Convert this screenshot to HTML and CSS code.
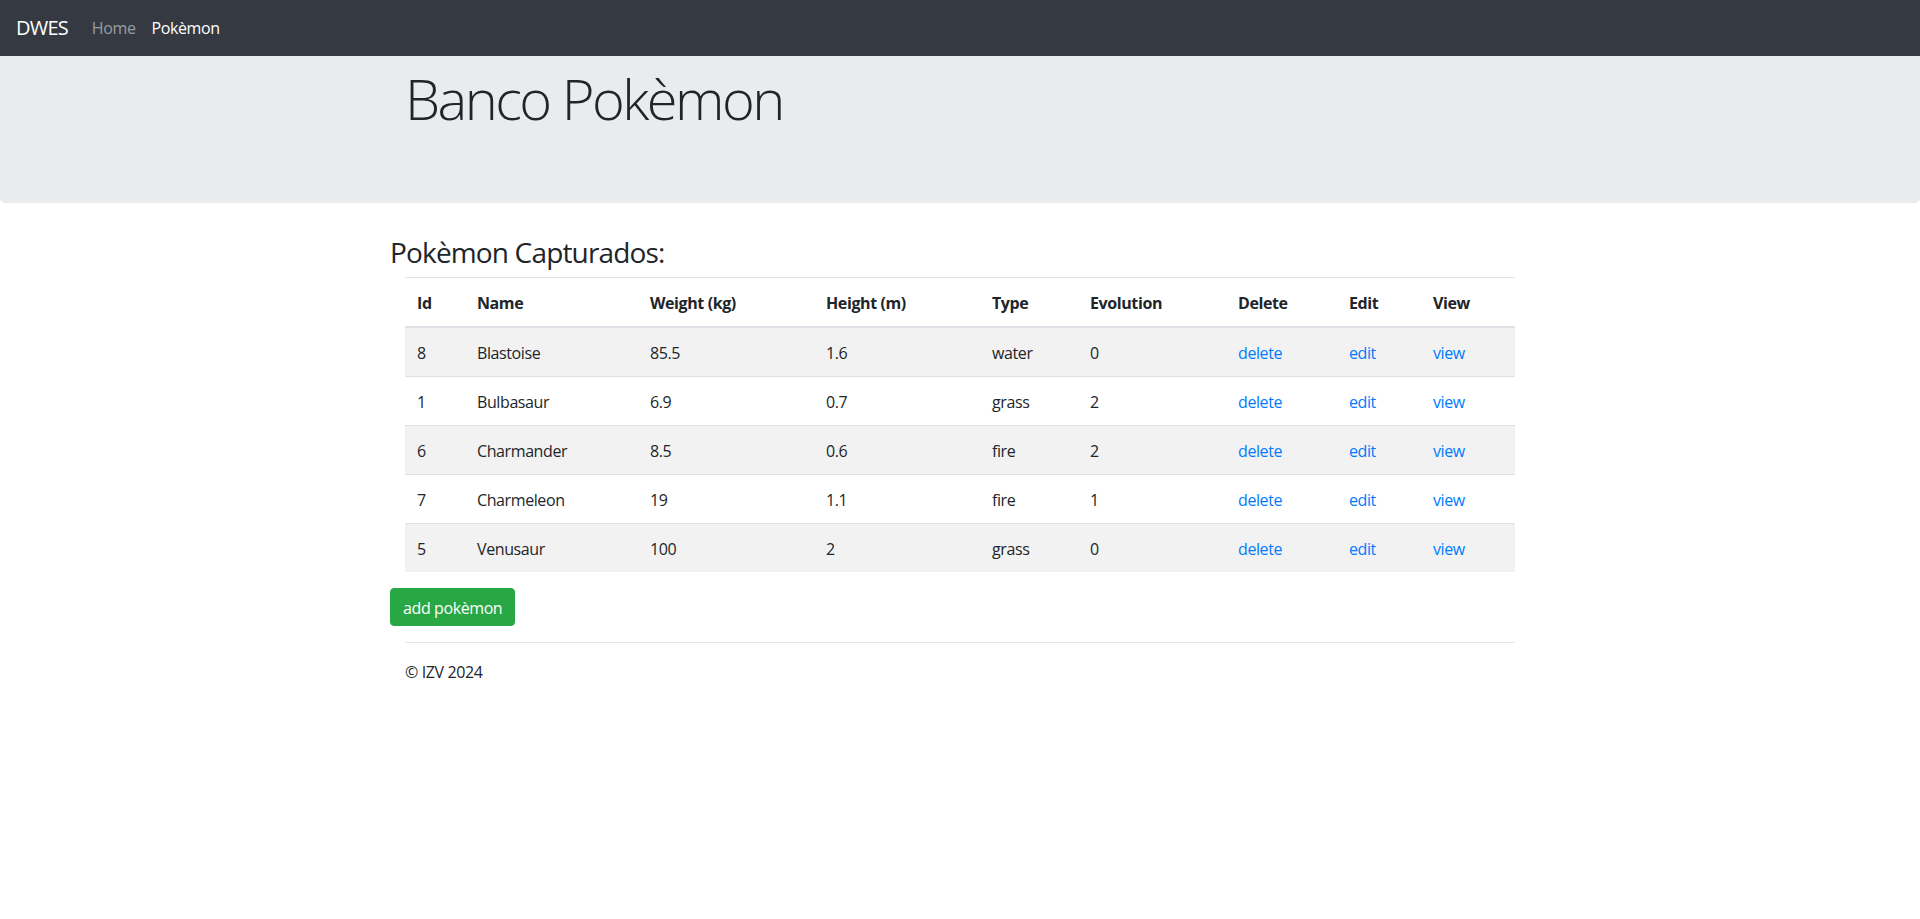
FILE: index.html
```html
<!DOCTYPE html>
<html lang="es">
<head>
<meta charset="utf-8">
<title>Banco Pokèmon</title>
<link rel="stylesheet" href="styles.css">
</head>
<body>
<nav class="navbar">
  <a class="brand" href="#">DWES</a>
  <ul class="nav">
    <li><a class="nav-link" href="#">Home</a></li>
    <li><a class="nav-link active" href="#">Pokèmon</a></li>
  </ul>
</nav>
<main>
  <div class="jumbotron">
    <div class="container">
      <h1 class="display">Banco Pokèmon</h1>
    </div>
  </div>
  <div class="container">
    <div class="row">
      <h3 class="section-title">Pokèmon Capturados:</h3>
    </div>
    <table class="table">
      <colgroup>
        <col class="c-id"><col class="c-name"><col class="c-weight"><col class="c-height"><col class="c-type"><col class="c-evo"><col class="c-del"><col class="c-edit"><col class="c-view">
      </colgroup>
      <thead>
        <tr><th>Id</th><th>Name</th><th>Weight (kg)</th><th>Height (m)</th><th>Type</th><th>Evolution</th><th>Delete</th><th>Edit</th><th>View</th></tr>
      </thead>
      <tbody>
        <tr><td>8</td><td>Blastoise</td><td>85.5</td><td>1.6</td><td>water</td><td>0</td><td><a href="#">delete</a></td><td><a href="#">edit</a></td><td><a href="#">view</a></td></tr>
        <tr><td>1</td><td>Bulbasaur</td><td>6.9</td><td>0.7</td><td>grass</td><td>2</td><td><a href="#">delete</a></td><td><a href="#">edit</a></td><td><a href="#">view</a></td></tr>
        <tr><td>6</td><td>Charmander</td><td>8.5</td><td>0.6</td><td>fire</td><td>2</td><td><a href="#">delete</a></td><td><a href="#">edit</a></td><td><a href="#">view</a></td></tr>
        <tr><td>7</td><td>Charmeleon</td><td>19</td><td>1.1</td><td>fire</td><td>1</td><td><a href="#">delete</a></td><td><a href="#">edit</a></td><td><a href="#">view</a></td></tr>
        <tr><td>5</td><td>Venusaur</td><td>100</td><td>2</td><td>grass</td><td>0</td><td><a href="#">delete</a></td><td><a href="#">edit</a></td><td><a href="#">view</a></td></tr>
      </tbody>
    </table>
    <div class="row">
      <a class="btn btn-success" href="#">add pokèmon</a>
    </div>
  </div>
  <footer class="container footer">
    <hr>
    <p>© IZV 2024</p>
  </footer>
</main>
</body>
</html>
```

FILE: styles.css
```css
* { box-sizing: border-box; }

html, body {
  margin: 0;
  padding: 0;
}

body {
  font-family: "Open Sans", "Noto Sans", "Liberation Sans", sans-serif;
  font-size: 16px;
  line-height: 1.5;
  letter-spacing: -0.025em;
  color: #212529;
  background: #fff;
}

a { text-decoration: none; color: #007bff; }

/* Navbar */
.navbar {
  display: flex;
  align-items: center;
  height: 56px;
  padding: 0 16px;
  background: #353a42;
}

.brand {
  font-size: 20px;
  line-height: 30px;
  color: #fff;
  margin-right: 16px;
  letter-spacing: -0.04em;
}

.nav {
  display: flex;
  list-style: none;
  margin: 0;
  padding: 0;
}

.nav-link {
  display: block;
  padding: 8px;
  color: rgba(255, 255, 255, 0.5);
}

.nav-link.active { color: #fff; }

/* Jumbotron */
.jumbotron {
  background: #e9ecef;
  padding: 9px 0 63px;
  margin-bottom: 32px;
  border-radius: 0 0 5px 5px;
}

.container {
  width: 1140px;
  margin: 0 auto;
  padding: 0 15px;
}

.display {
  margin: 0 0 8px;
  font-size: 56px;
  font-weight: 300;
  line-height: 1.2;
  letter-spacing: -0.045em;
}

.row {
  display: flex;
  margin: 0 -15px;
}

.section-title {
  margin: 0 0 8px;
  padding-top: 1px;
  height: 34px;
  font-size: 28px;
  font-weight: 400;
  line-height: 1.2;
  letter-spacing: -0.03em;
}

/* Table */
.table {
  width: 100%;
  border-collapse: collapse;
  margin-bottom: 16px;
  table-layout: fixed;
}

.c-id { width: 60px; }
.c-name { width: 173px; }
.c-weight { width: 176px; }
.c-height { width: 166px; }
.c-type { width: 98px; }
.c-evo { width: 148px; }
.c-del { width: 111px; }
.c-edit { width: 84px; }
.c-view { width: 94px; }

.table th,
.table td {
  padding: 13px 12px 11px;
  text-align: left;
  vertical-align: top;
  border-top: 1px solid #dee2e6;
}

.table th { font-weight: 700; }

.table thead th {
  border-bottom: 2px solid #dee2e6;
}

.table tbody tr:nth-child(odd) {
  background: rgba(0, 0, 0, 0.05);
}

/* Button */
.btn {
  display: inline-block;
  padding: 7px 12px 5px;
  font-size: 16px;
  line-height: 24px;
  border-radius: 4px;
  border: 1px solid transparent;
}

.btn-success {
  background: #28a745;
  border-color: #28a745;
  color: #fff;
}

/* Footer */
.footer hr {
  margin: 16px 0;
  border: 0;
  border-top: 1px solid rgba(0, 0, 0, 0.1);
}

.footer p { margin: 0 0 16px; padding-top: 1px; }
```
